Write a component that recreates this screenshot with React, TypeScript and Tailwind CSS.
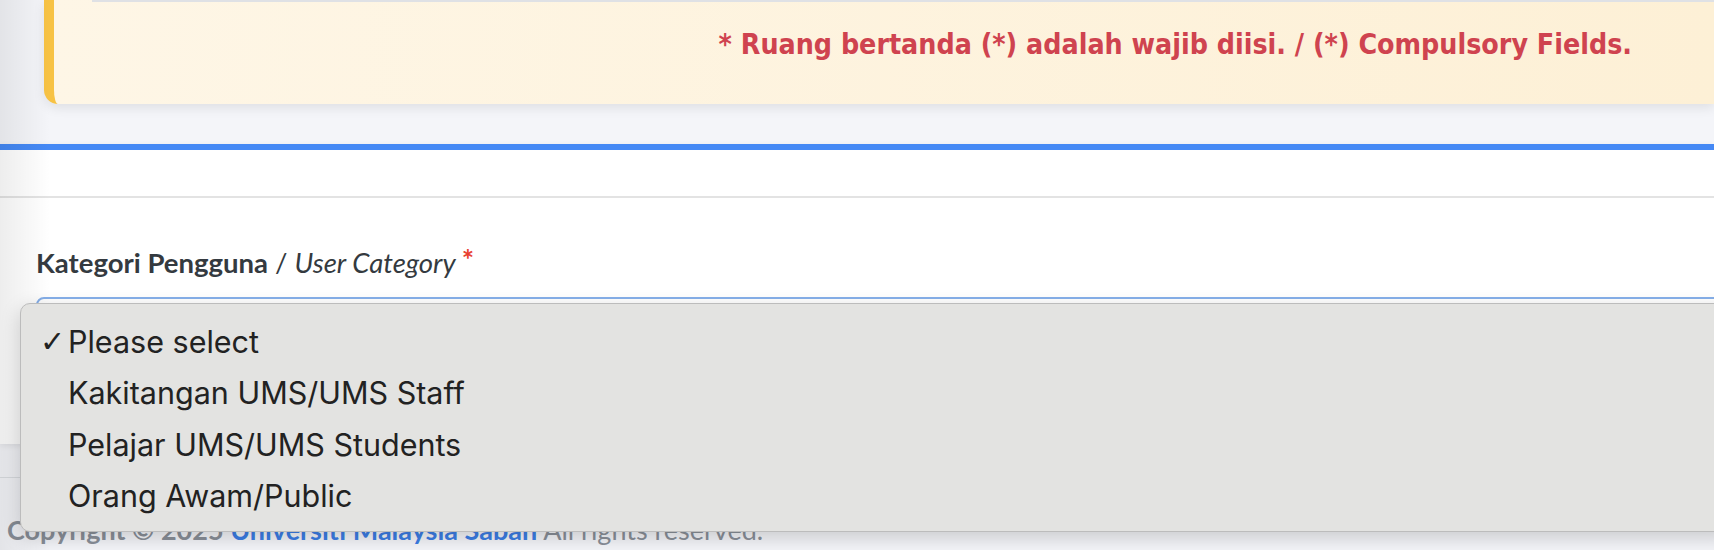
import React from "react";

export default function App() {
  const items = [
    { label: "Please select", checked: true },
    { label: "Kakitangan UMS/UMS Staff", checked: false },
    { label: "Pelajar UMS/UMS Students", checked: false },
    { label: "Orang Awam/Public", checked: false },
  ];
  return (
    <div className="relative h-[550px] w-full overflow-hidden bg-[#f4f5f9]">
      {/* notice card */}
      <div className="pl-[44px]">
        <div className="h-[104px] rounded-bl-[14px] border-l-[10px] border-[#f7c244] bg-linear-to-r from-[#fef6e6] to-[#fdf0d6] shadow-[0_4px_12px_rgba(0,0,0,0.09)]">
          <div className="ml-[38px] h-[2px] bg-[#dfe1e5]" />
          <div className="flex justify-end pr-[82px] pt-[26px]">
            <p className="font-['DejaVu_Sans_Condensed',sans-serif] text-[28.3px] font-bold leading-[34px] text-[#cf434f]">
              * Ruang bertanda (*) adalah wajib diisi. / (*) Compulsory Fields.
            </p>
          </div>
        </div>
      </div>

      {/* form panel */}
      <div className="mt-[40px] border-t-[6px] border-[#4589f5] bg-white shadow-[0_2px_6px_rgba(0,0,0,0.08)]">
        <div className="h-[48px] border-b-2 border-[#e3e3e3]" />
        <div className="h-[246px] pl-[36px] pt-[48px]">
          <label className="block whitespace-nowrap font-['Lato',sans-serif] text-[27.5px] leading-[32px] text-[#343a40]">
            <span className="font-bold">Kategori Pengguna</span>
            <span> / </span>
            <span className="italic">User Category</span>
            <span className="relative -top-[3px] ml-[6px] text-[29px] font-bold text-[#e8402f]">*</span>
          </label>
          <div className="mr-[-20px] mt-[18px] h-[56px] rounded-[8px] border-2 border-[#86b0ea] bg-white" />
        </div>
      </div>

      {/* footer */}
      <div className="mt-[33px] border-t border-[#dcdfe3] pl-[7px] pt-[36px]">
        <p className="whitespace-nowrap font-['Lato',sans-serif] text-[27px] leading-[32px] text-[#8a9099]">
          <span className="font-bold">Copyright © 2025 </span>
          <span className="font-bold text-[#3c7ee6]">Universiti Malaysia Sabah</span>
          <span> All rights reserved.</span>
        </p>
      </div>

      {/* left shade */}
      <div className="pointer-events-none absolute inset-y-0 left-0 w-[50px] bg-linear-to-r from-[rgba(0,0,0,0.07)] to-transparent" />

      {/* native select popup */}
      <div className="absolute left-[20px] right-[-20px] top-[303px] h-[229px] rounded-[10px] border border-[#bcbcbc] bg-[#e3e3e1] pt-[12px] shadow-[0_6px_20px_rgba(0,0,0,0.18)]">
        {items.map((it) => (
          <div
            key={it.label}
            className="flex h-[51.5px] items-center font-['Inter',sans-serif] text-[30.5px] text-[#222222]"
          >
            <span className="w-[47px] pl-[19px] font-['DejaVu_Sans',sans-serif] text-[30px]">
              {it.checked ? "✓" : ""}
            </span>
            <span>{it.label}</span>
          </div>
        ))}
      </div>
    </div>
  );
}
